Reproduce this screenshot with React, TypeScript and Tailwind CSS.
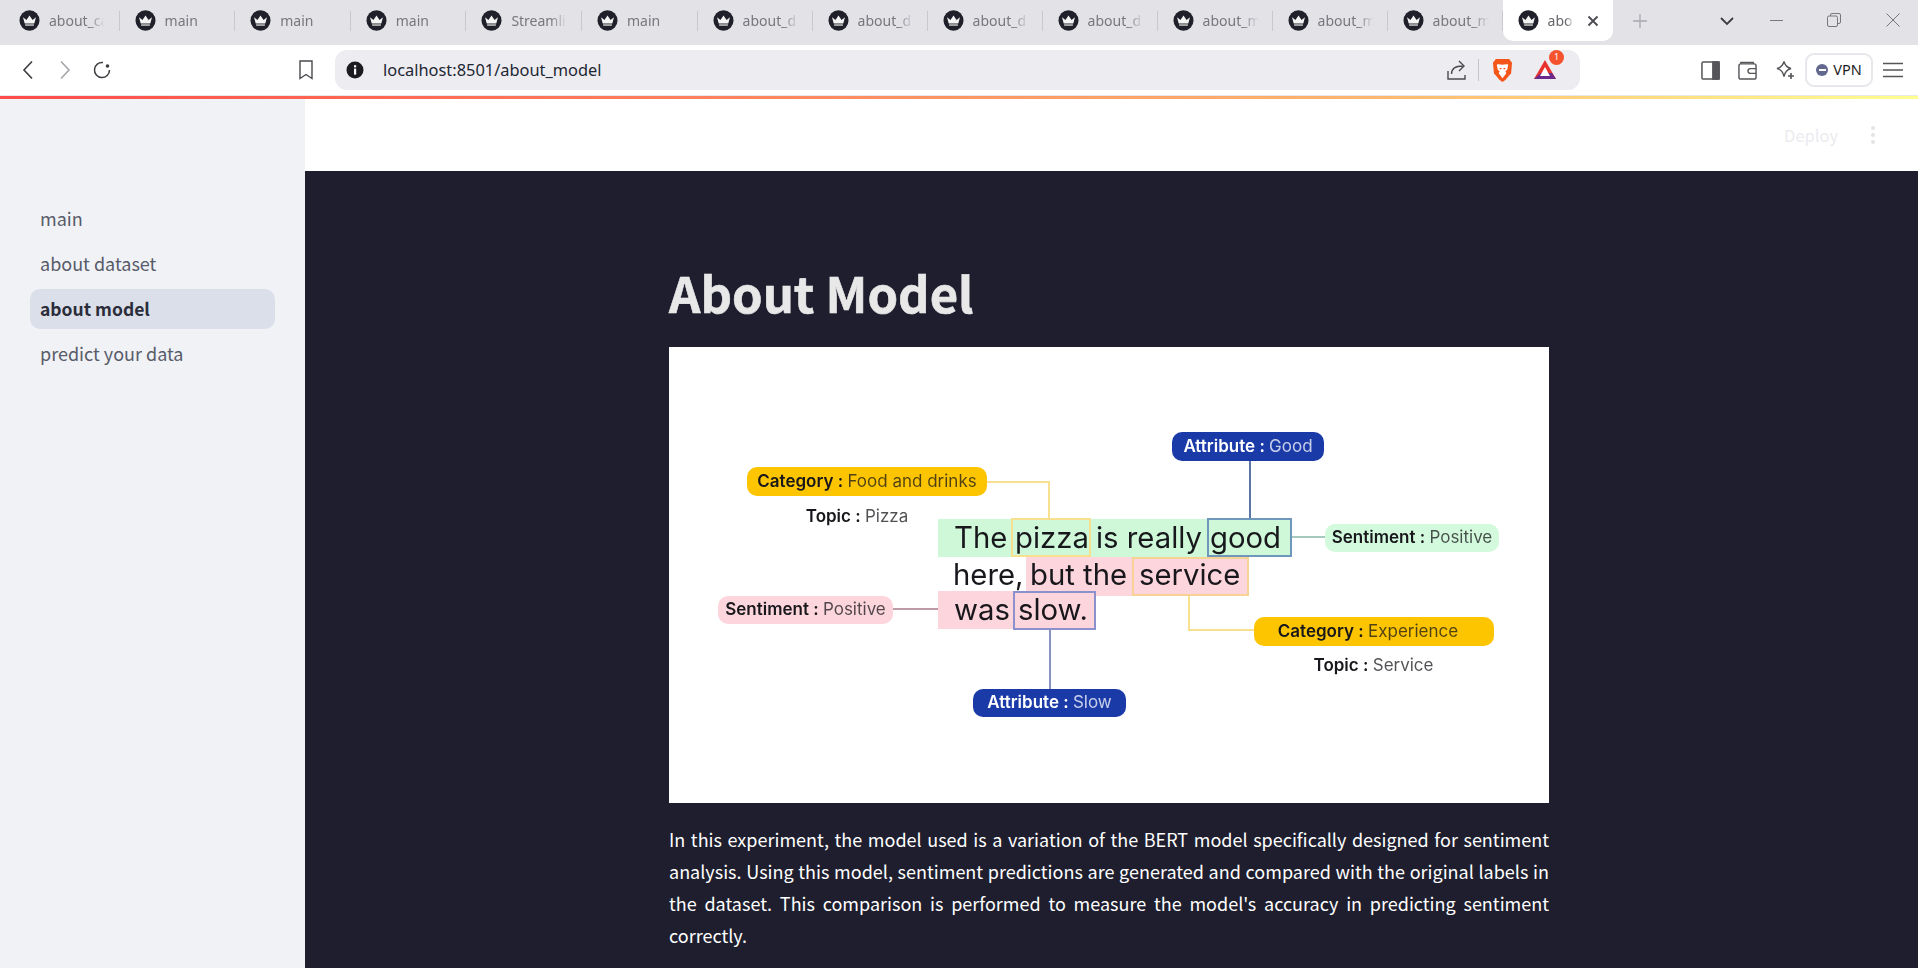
import React from "react";

const tabs = ["about_ca", "main", "main", "main", "Streamli", "main", "about_d", "about_d", "about_d", "about_d", "about_m", "about_m", "about_m"];

function Crown({ className = "" }: { className?: string }) {
  return (
    <svg viewBox="0 0 22 22" className={className}>
      <ellipse cx="11" cy="11" rx="10.5" ry="10.8" fill="#20202b" />
      <path d="M4.2 7.6 7.8 10.4 11 5.8 14.2 10.4 17.8 7.6 16 14.2H6Z" fill="#f4f4f4" />
      <rect x="6.4" y="15" width="9.2" height="1.5" fill="#cfcfcf" />
    </svg>
  );
}

function Pill({ b, v, className }: { b: string; v: string; className: string }) {
  return (
    <div className={`absolute flex items-center justify-center whitespace-nowrap font-['Inter',sans-serif] text-[17px] ${className}`}>
      <span className="font-semibold">{b}&nbsp;:&nbsp;</span>
      <span className="opacity-75">{v}</span>
    </div>
  );
}

function Word({ t, className }: { t: string; className: string }) {
  return <div className={`absolute whitespace-nowrap font-['Inter',sans-serif] text-[29.3px] leading-[39px] ${className}`}>{t}</div>;
}

function Diagram() {
  return (
    <div className="relative h-[456px] w-[880px] bg-white text-[#17171c] blur-[0.3px]">
      <div className="absolute left-[269px] top-[172px] h-[38px] w-[354px] bg-[#cff8d8]" />
      <div className="absolute left-[357px] top-[210px] h-[39px] w-[223px] bg-[#fdd5dc]" />
      <div className="absolute left-[269px] top-[244px] h-[38px] w-[158px] bg-[#fdd5dc]" />

      <div className="absolute left-[342px] top-[171px] h-[39px] w-[80px] border-2 border-[#f7e08f]" />
      <div className="absolute left-[538px] top-[171px] h-[39px] w-[85px] border-2 border-[#6d97bb]" />
      <div className="absolute left-[463px] top-[210px] h-[39px] w-[117px] border-2 border-[#f8d294]" />
      <div className="absolute left-[344px] top-[244px] h-[39px] w-[83px] border-2 border-[#8a91cc]" />

      <Word t="The" className="left-[285px] top-[171px]" />
      <Word t="pizza" className="left-[346px] top-[171px]" />
      <Word t="is really" className="left-[427px] top-[171px]" />
      <Word t="good" className="left-[541px] top-[171px]" />
      <Word t="here," className="left-[284px] top-[208px]" />
      <Word t="but the" className="left-[361px] top-[208px]" />
      <Word t="service" className="left-[470px] top-[208px]" />
      <Word t="was" className="left-[285px] top-[243px]" />
      <Word t="slow." className="left-[349px] top-[243px]" />

      <div className="absolute left-[318px] top-[134px] h-[37px] w-[63px] border-r-2 border-t-2 border-[#f7e08f]" />
      <div className="absolute left-[519px] top-[249px] h-[35px] w-[66px] border-b-2 border-l-2 border-[#f7e08f]" />
      <div className="absolute left-[580px] top-[114px] h-[57px] w-[2px] bg-[#5d76a8]" />
      <div className="absolute left-[380px] top-[283px] h-[60px] w-[2px] bg-[#8a94c0]" />
      <div className="absolute left-[623px] top-[189px] h-[2px] w-[33px] bg-[#a5c9bf]" />
      <div className="absolute left-[224px] top-[261px] h-[2px] w-[45px] bg-[#bd9aa5]" />

      <Pill b="Category" v="Food and drinks" className="left-[78px] top-[120px] h-[29px] w-[240px] rounded-[10px] bg-[#fdc500]" />
      <Pill b="Topic" v="Pizza" className="left-[138px] top-[155px] h-[29px] w-[100px]" />
      <Pill b="Attribute" v="Good" className="left-[503px] top-[85px] h-[29px] w-[152px] rounded-[10px] bg-[#1a3aa8] text-white" />
      <Pill b="Sentiment" v="Positive" className="left-[656px] top-[177px] h-[28px] w-[174px] rounded-[10px] bg-[#d3fadc]" />
      <Pill b="Category" v="Experience" className="left-[585px] top-[270px] h-[29px] w-[240px] rounded-[10px] bg-[#fdc500] pr-[12px]" />
      <Pill b="Topic" v="Service" className="left-[645px] top-[304px] h-[29px] w-[119px]" />
      <Pill b="Sentiment" v="Positive" className="left-[49px] top-[249px] h-[28px] w-[175px] rounded-[10px] bg-[#fdd5dc]" />
      <Pill b="Attribute" v="Slow" className="left-[304px] top-[342px] h-[28px] w-[153px] rounded-[10px] bg-[#1a3aa8] text-white" />
    </div>
  );
}

export default function App() {
  return (
    <div className="flex h-[968px] w-[1918px] flex-col overflow-hidden bg-white font-['Noto_Sans',sans-serif]">
      {/* Tab strip */}
      <div className="flex h-[45px] items-start bg-[#e3e2e7] pl-[4px]">
        {tabs.map((t, i) => (
          <div key={i} className={`flex h-[41px] items-center pl-[15px] ${i < 6 ? "w-[115.6px]" : "w-[115px]"}`}>
            <Crown className="h-[21px] w-[21px] shrink-0" />
            <span className="ml-[9px] w-[56px] overflow-hidden whitespace-nowrap text-[14px] text-[#77777c] [mask-image:linear-gradient(to_right,black_70%,transparent)]">{t}</span>
            <span className="ml-auto h-[20px] w-px bg-[#c9c8cd]" />
          </div>
        ))}
        <div className="flex h-[41px] w-[110px] items-center rounded-b-[10px] bg-white pl-[15px]">
          <Crown className="h-[21px] w-[21px] shrink-0" />
          <span className="ml-[9px] w-[26px] overflow-hidden whitespace-nowrap text-[14px] text-[#66666b] [mask-image:linear-gradient(to_right,black_70%,transparent)]">about</span>
          <svg viewBox="0 0 12 12" className="ml-[13px] h-[12px] w-[12px]" stroke="#4a4a4f" strokeWidth="1.8" fill="none"><path d="M1.5 1.5l9 9M10.5 1.5l-9 9" /></svg>
        </div>
        <svg viewBox="0 0 14 14" className="ml-[20px] mt-[14px] h-[14px] w-[14px]" stroke="#a9a8ae" strokeWidth="1.3" fill="none"><path d="M7 0v14M0 7h14" /></svg>
        <svg viewBox="0 0 14 10" className="ml-[73px] mt-[16px] h-[10px] w-[14px]" stroke="#3c3c41" strokeWidth="1.8" fill="none"><path d="M1 2l6 6 6-6" /></svg>
        <div className="ml-[36px] mt-[20px] h-px w-[13px] bg-[#77777c]" />
        <svg viewBox="0 0 14 14" className="ml-[44px] mt-[13px] h-[14px] w-[14px]" stroke="#77777c" strokeWidth="1" fill="none"><rect x="0.5" y="3" width="10" height="10.5" rx="1.5" /><path d="M3.5 3V2a1.5 1.5 0 0 1 1.5-1.5h7A1.5 1.5 0 0 1 13.5 2v7a1.5 1.5 0 0 1-1.5 1.5h-1.5" /></svg>
        <svg viewBox="0 0 14 14" className="ml-[45px] mt-[13px] h-[14px] w-[14px]" stroke="#77777c" strokeWidth="1" fill="none"><path d="M0.5 0.5l13 13M13.5 0.5l-13 13" /></svg>
      </div>

      {/* Toolbar */}
      <div className="flex h-[50px] items-center bg-white">
        <svg viewBox="0 0 12 20" className="ml-[22px] h-[20px] w-[12px]" stroke="#3c3c41" strokeWidth="1.6" fill="none"><path d="M10 1.5 2 10l8 8.5" /></svg>
        <svg viewBox="0 0 12 20" className="ml-[25px] h-[20px] w-[12px]" stroke="#a5a5aa" strokeWidth="1.6" fill="none"><path d="M2 1.5 10 10l-8 8.5" /></svg>
        <svg viewBox="0 0 20 20" className="ml-[21px] h-[20px] w-[20px]" stroke="#3c3c41" strokeWidth="1.5" fill="none"><path d="M17.5 10A7.5 7.5 0 1 1 11 2.6" /><circle cx="15.5" cy="6" r="1.8" fill="#3c3c41" stroke="none" /></svg>
        <svg viewBox="0 0 16 20" className="ml-[186px] h-[20px] w-[16px]" stroke="#4a4a4f" strokeWidth="1.4" fill="none"><path d="M2 1h12v17.5l-6-4-6 4Z" /></svg>
        <div className="ml-[21px] flex h-[40px] w-[1245px] items-center rounded-[12px] bg-[#edecf1] pl-[11px]">
          <svg viewBox="0 0 18 18" className="h-[18px] w-[18px]"><circle cx="9" cy="9" r="8.5" fill="#1c1c20" /><rect x="8" y="7.6" width="2.2" height="6" fill="#fff" /><rect x="8" y="4.2" width="2.2" height="2.2" fill="#fff" /></svg>
          <span className="ml-[19px] text-[16.4px] text-[#1d2733]">localhost:8501/about_model</span>
          <svg viewBox="0 0 22 22" className="ml-auto h-[22px] w-[22px]" stroke="#4a4a4f" strokeWidth="1.4" fill="none"><path d="M2 12v8h17v-4" /><path d="M5.5 15c0-5.5 4-8 11-8M13 2l5 5-5 5" /></svg>
          <span className="ml-[10px] h-[22px] w-px bg-[#c5c4ca]" />
          <svg viewBox="0 0 22 26" className="ml-[13px] h-[25px] w-[21px]"><path d="M4 1h14l3 4-1 11-6 7-3 2-3-2-6-7L1 5Z" fill="#f4561a" /><path d="M5 7c2-1 4 0 6 0s4-1 6 0l-1 5-2 2 1 2-4 5-4-5 1-2-2-2Z" fill="#fff" /><path d="M8 11h2M12 11h2" stroke="#f4561a" strokeWidth="1.4" /></svg>
          <svg viewBox="0 0 24 22" className="ml-[20px] h-[22px] w-[24px]"><path d="M12 1 23 20H1Z" fill="#e8322c" /><path d="M1 20h22l-4-6H15l-3 0H8Z" fill="#6b2a8c" /><path d="M12 8 17 17H7Z" fill="#fff" /></svg>
          <div className="relative ml-[-8px] mt-[-26px] flex h-[15px] w-[15px] items-center justify-center rounded-full bg-[#f5532d] text-[9px] text-white">1</div>
          <span className="w-[16px]" />
        </div>
        <svg viewBox="0 0 20 20" className="ml-[121px] h-[19px] w-[19px]" stroke="#55555a" strokeWidth="1.6" fill="none"><rect x="1" y="1" width="18" height="18" rx="1.5" /><rect x="12.5" y="1" width="6.5" height="18" fill="#55555a" /></svg>
        <svg viewBox="0 0 20 20" className="ml-[18px] h-[19px] w-[19px]" stroke="#55555a" strokeWidth="1.5" fill="none"><rect x="1" y="3" width="18" height="16" rx="2" /><path d="M3 3V1.5h13V3M19 8h-6a2.5 2.5 0 0 0 0 5h6" /></svg>
        <svg viewBox="0 0 20 20" className="ml-[18px] h-[20px] w-[20px]" stroke="#55555a" strokeWidth="1.4" fill="none"><path d="M9 1.5c1 4 3 6 7 7-4 1-6 3-7 8-1-5-3-7-7-8 4-1 6-3 7-7Z" /><path d="M16 13v6M13 16h6" strokeWidth="1.6" /></svg>
        <div className="ml-[10px] flex h-[34px] w-[68px] items-center justify-center gap-[5px] rounded-[9px] border-2 border-[#e8e8ec] text-[14.5px] text-[#1d1d22]">
          <span className="flex h-[12px] w-[12px] items-center justify-center rounded-full bg-[#63688f]"><span className="h-[2px] w-[7px] bg-white" /></span>
          VPN
        </div>
        <svg viewBox="0 0 20 16" className="ml-[10px] h-[16px] w-[20px]" stroke="#55555a" strokeWidth="1.6" fill="none"><path d="M0 1.5h20M0 8h20M0 14.5h20" /></svg>
      </div>

      <div className="h-[4px] border-t border-[#e8e8ec] bg-[linear-gradient(to_right,#ff4b4b,#ffb36b_70%,#ffff8f)]" />

      {/* Page */}
      <div className="flex min-h-0 flex-1 font-['Noto_Sans_CJK_SC','Noto_Sans',sans-serif]">
        <aside className="w-[305px] shrink-0 bg-[#f0f2f6] px-[30px] pt-[100px] text-[18px] text-[#585b69]">
          <div className="flex h-[40px] items-center px-[10px] pb-[2px]">main</div>
          <div className="mt-[5px] flex h-[40px] items-center px-[10px] pb-[2px]">about dataset</div>
          <div className="mt-[5px] flex h-[40px] items-center rounded-[10px] bg-[#dbdfe9] px-[10px] text-[17.5px] font-semibold text-[#2b2d3a]">about model</div>
          <div className="mt-[5px] flex h-[40px] items-center px-[10px] pb-[2px]">predict your data</div>
        </aside>
        <div className="flex min-w-0 flex-1 flex-col">
          <header className="flex h-[72px] shrink-0 items-center bg-white pr-[43px]">
            <span className="ml-auto text-[16.5px] text-[#ebebef]">Deploy</span>
            <svg viewBox="0 0 4 18" className="ml-[33px] h-[18px] w-[4px]" fill="#e4e4e8"><circle cx="2" cy="2" r="2" /><circle cx="2" cy="9" r="2" /><circle cx="2" cy="16" r="2" /></svg>
          </header>
          <main className="flex-1 bg-[#1e1e2e] pl-[364px]">
            <h1 className="mt-[88px] text-[49px] font-bold leading-[66px] text-[#e8e8e8] [-webkit-text-stroke:0.6px_#e8e8e8]">About Model</h1>
            <div className="mt-[22px]"><Diagram /></div>
            <p className="mt-[20px] w-[880px] text-justify text-[18px] leading-[32px] text-white">
              In this experiment, the model used is a variation of the BERT model specifically designed for sentiment analysis. Using this model, sentiment predictions are generated and compared with the original labels in the dataset. This comparison is performed to measure the model's accuracy in predicting sentiment correctly.
            </p>
          </main>
        </div>
      </div>
    </div>
  );
}
